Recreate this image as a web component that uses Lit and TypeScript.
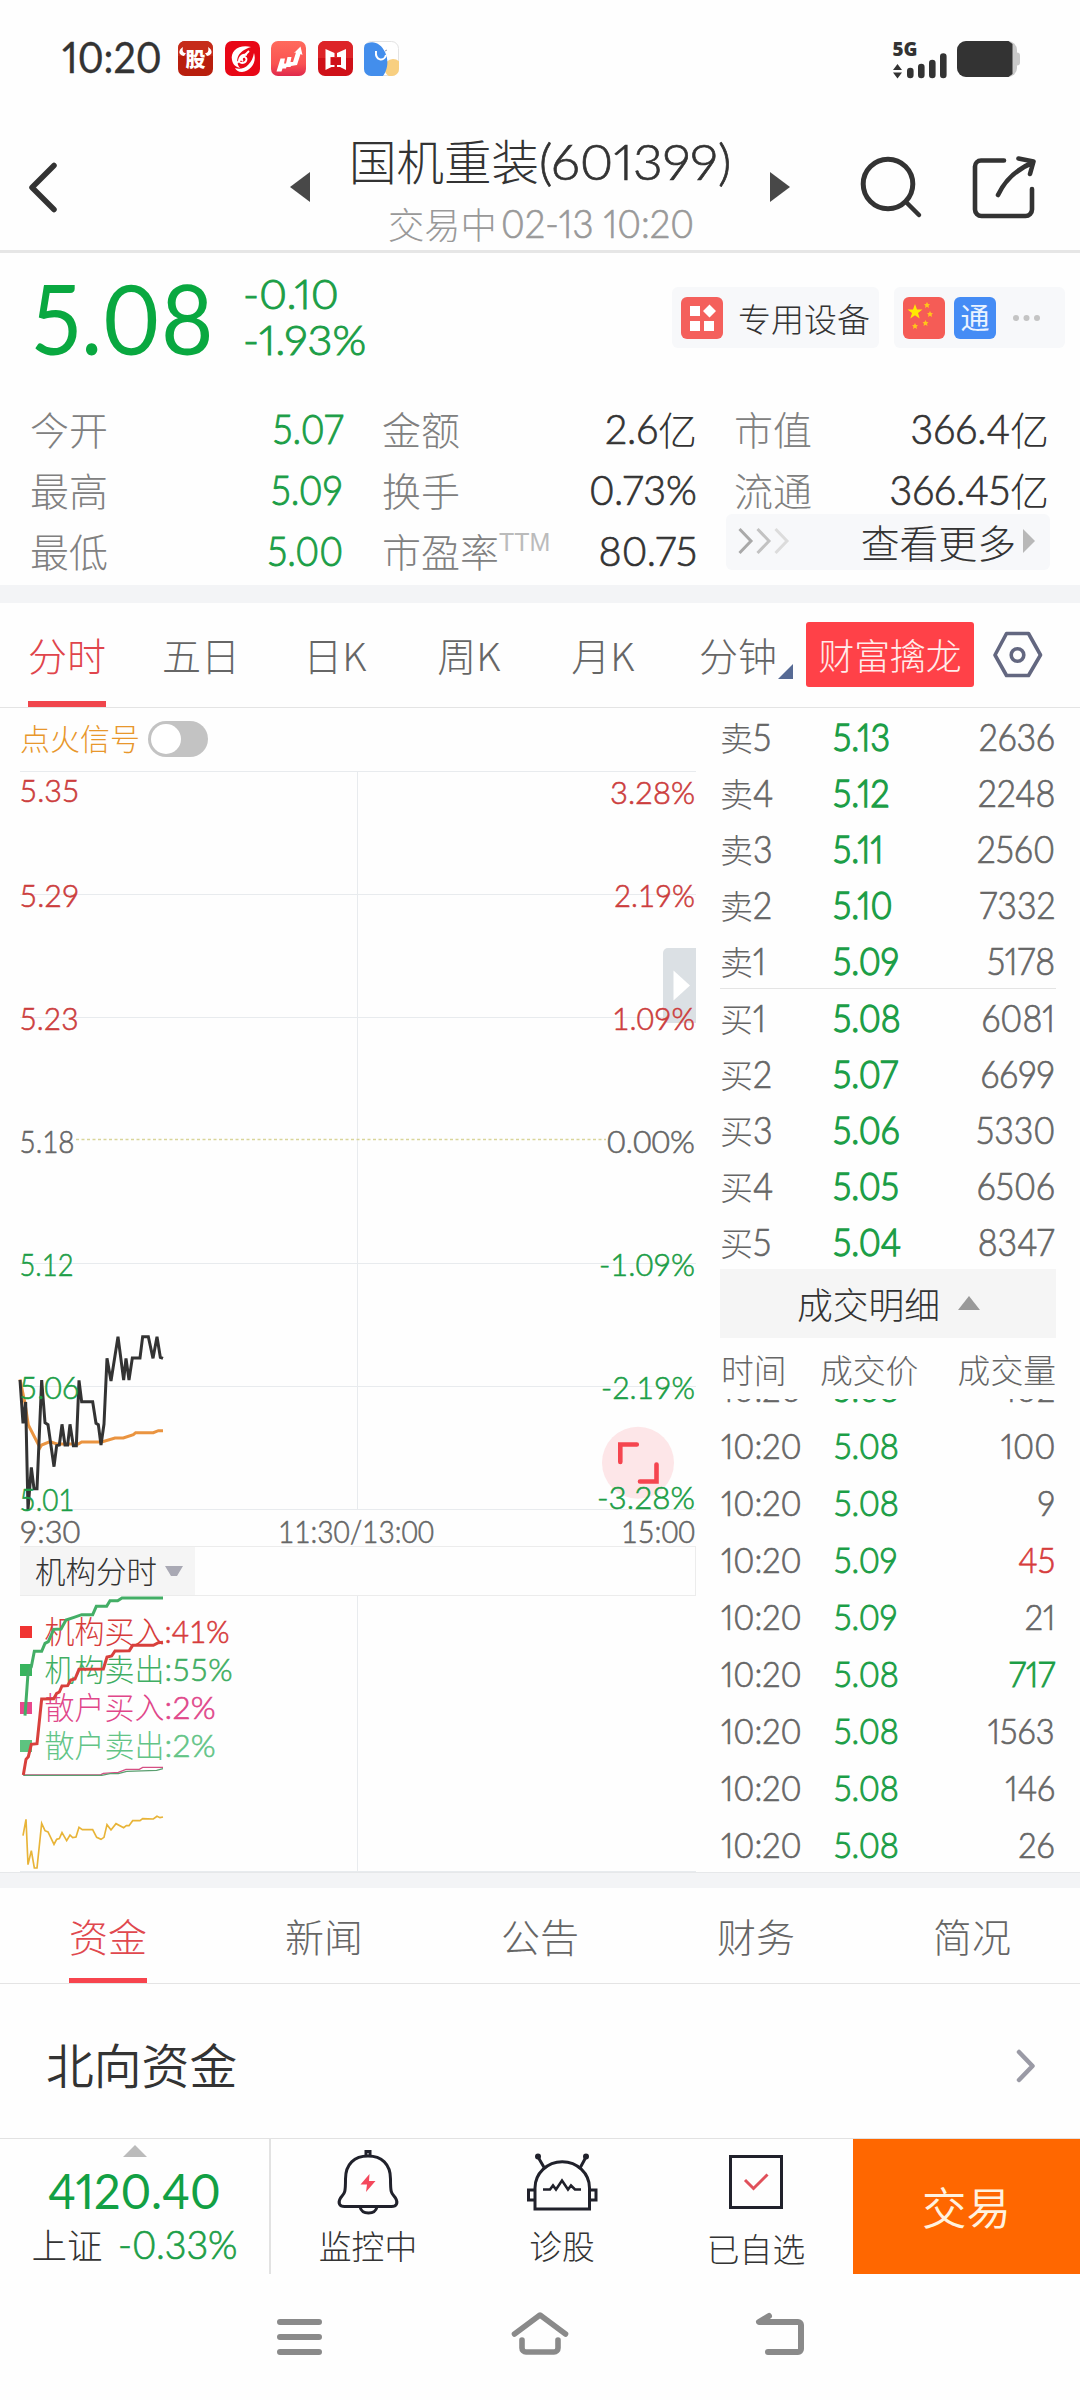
import { LitElement, html, svg, css } from "lit";
import { customElement } from "lit/decorators.js";

type Tone = "up" | "down" | "flat";

const base = css`
  :host { display: block; font-family: "Noto Sans CJK SC", sans-serif; font-weight: 300; color: #333; }
  * { box-sizing: border-box; }
  svg { display: block; flex: none; overflow: visible; }
  .n { display: inline-block; font-family: Lato, "Noto Sans CJK SC", sans-serif; font-weight: 300; font-variant-numeric: proportional-nums; -webkit-text-stroke: 0.700px currentColor; transform: scaleX(0.92); transform-origin: left center; white-space: nowrap; }
  .n.r { transform-origin: right center; }
  .n.c { transform-origin: center; }
  .up { color: #d63c3c; }
  .down { color: #1c9e47; }
  .flat { color: #666; }
`;

@customElement("status-bar")
class StatusBar extends LitElement {
  static styles = [base, css`
    .bar { display: flex; align-items: flex-start; height: 110px; padding: 40px 60px 0 62px; }
    .time { font-size: 42px; line-height: 34px; width: 116px; font-weight: 400; -webkit-text-stroke: 0.300px #333; transform: scaleX(0.94); }
    .apps { display: flex; gap: 11.6px; padding-top: 1px; }
    .sig { margin-left: auto; }
  `];
  render() {
    return html`<div class="bar">
      <span class="n time">10:20</span>
      <div class="apps">
        <svg width="35" height="35" viewBox="0 0 35 35"><rect width="35" height="35" rx="7" fill="#b81e0d"/><path d="M0 7a7 7 0 0 1 7-7h21a7 7 0 0 1 7 7v8H0z" fill="#c62c1a"/><text x="17.5" y="26" font-size="20" font-weight="900" font-family="Noto Sans CJK SC" fill="#fff" text-anchor="middle">股</text><path d="M5 6c-5 3-5 8 1 9l2-3c-3 0-4-2-3-6zM30 6c5 3 5 8-1 9l-2-3c3 0 4-2 3-6z" fill="#fff"/></svg>
        <svg width="35" height="35" viewBox="0 0 35 35"><rect width="35" height="35" rx="7" fill="#e80716"/><path d="M26 6C14 3 5 10 7 19c1 5 4 7 8 8-6-8-2-17 11-21z" fill="#fff"/><path d="M29 12c3 9-3 18-12 19-4 0-6-2-7-4 8 3 17-3 19-15z" fill="#fff"/><path d="M24 10 12 22M22 14c-7-2-11 8-5 8 4 0 6-4 3-6-3-1-4 3-2 4" fill="none" stroke="#fff" stroke-width="1.800"/></svg>
        <svg width="35" height="35" viewBox="0 0 35 35"><defs><linearGradient id="g" x2="0" y2="1"><stop stop-color="#ff6a5c"/><stop offset=".65" stop-color="#fa5252"/><stop offset="1" stop-color="#df284b"/></linearGradient></defs><rect width="35" height="35" rx="7" fill="url(#g)"/><path d="M9.500 17.500h4.500l-1 5h2l1.500-6.500h4l-1 5h2.500l3-9.500-2 .500 6.500-6.500 2 8.500-2-1-3.500 11-6 1-.500 1h-4l-.500 1.500h-3.500l-1 3H5.500z" fill="#fff"/></svg>
        <svg width="35" height="35" viewBox="0 0 35 35"><rect width="35" height="35" rx="7" fill="#cf1018"/><path d="M0 17V7a7 7 0 0 1 7-7h21a7 7 0 0 1 7 7v10z" fill="#dd2428"/><path d="M7.500 8l9 4v4h-4v8h4v2l-3 0-6 3zM28 8l-9 4v4h4v8h-4v2h3l6 3z" fill="#fff"/></svg>
        <svg width="35" height="35" viewBox="0 0 35 35"><defs><clipPath id="c"><rect width="35" height="35" rx="7"/></clipPath></defs><rect x=".5" y=".5" width="34" height="34" rx="7" fill="#fff" stroke="#e3e3e3"/><g clip-path="url(#c)"><circle cx="29" cy="27" r="9" fill="#f8cf80"/><path d="M0 4C8-2 17 2 21 11c5 11 1 20-2 24H0z" fill="#438eec"/></g><path d="M12 10c-1 10 8 11 10 4" fill="none" stroke="#fff" stroke-width="2"/><path d="M21 10l2-1" stroke="#99a" stroke-width="1"/></svg>
      </div>
      <svg class="sig" width="128" height="40" viewBox="892 39 128 40">
        <text x="892.5" y="55" font-family="Open Sans" font-weight="800" font-size="19.5" fill="#333" textLength="25" lengthAdjust="spacingAndGlyphs">5G</text>
        <path d="M893 69l4.500-6 4.500 6zM893 71.500l4.500 6 4.500-6z" fill="#333"/>
        <g stroke="#333" stroke-width="6.600" stroke-linecap="round"><path d="M910.300 70v4M921.300 66v8M932.300 62v12M943.300 55.500v18.500"/></g>
        <rect x="957" y="40" width="60" height="36" rx="9" fill="#c9c9c9"/><rect x="1014" y="51.500" width="6" height="13" rx="3" fill="#c9c9c9"/>
        <path d="M966 40h42.500l4 3v30l-4 3H966a9 9 0 0 1-9-9V49a9 9 0 0 1 9-9z" fill="#333"/>
      </svg>
    </div>`;
  }
}

@customElement("stock-header")
class StockHeader extends LitElement {
  static styles = [base, css`
    .head { display: flex; height: 143px; border-bottom: 3px solid #e6e6e6; padding: 0 44px 0 28px; }
    .back { margin-top: 51px; }
    .prev { margin: 62px 0 0 232px; }
    .mid { width: 460px; display: flex; flex-direction: column; align-items: center; }
    .title { display: flex; font-size: 47.500px; line-height: 50px; margin-top: 25px; width: 382px; white-space: nowrap; }
    .title .n { font-size: 49.500px; margin-top: 1px; transform: scaleX(1.045); }
    .sub { display: flex; font-size: 36.300px; line-height: 40px; margin-top: 17px; width: 304px; color: #999; white-space: nowrap; }
    .sub .n { font-size: 38.500px; margin-left: 4px; transform: scaleX(0.950); }
    .next { margin-top: 62px; }
    .search { margin: 46px 0 0 70px; }
    .share { margin: 46px 0 0 auto; }
  `];
  render() {
    return html`<div class="head">
      <svg class="back" width="30" height="54" viewBox="0 0 30 54"><path d="M26 4.500 4 26.500 26 48.500" fill="none" stroke="#333" stroke-width="5.500" stroke-linecap="round" stroke-linejoin="round"/></svg>
      <svg class="prev" width="20" height="30" viewBox="0 0 20 30"><path d="M20 0v30L0 15z" fill="#484848"/></svg>
      <div class="mid">
        <div class="title">国机重装<span class="n">(601399)</span></div>
        <div class="sub">交易中<span class="n">02-13 10:20</span></div>
      </div>
      <svg class="next" width="20" height="30" viewBox="0 0 20 30"><path d="M0 0v30l20-15z" fill="#484848"/></svg>
      <svg class="search" width="62" height="64" viewBox="860 156 62 64"><circle cx="888" cy="184" r="24.800" fill="none" stroke="#333" stroke-width="5"/><path d="M907 203l12 12" stroke="#333" stroke-width="4.500" stroke-linecap="round"/></svg>
      <svg class="share" width="64" height="64" viewBox="972 156 64 64" fill="none" stroke="#333" stroke-width="4.600" stroke-linecap="round" stroke-linejoin="round"><path d="M1004 160.500h-23a6 6 0 0 0-6 6v43a6.500 6.500 0 0 0 6.500 6.500h44a6.500 6.500 0 0 0 6.500-6.500V189"/><path d="M998 195c7-15 19-26 35-32.500M1018.500 158.500l15 3-3.500 12.500"/></svg>
    </div>`;
  }
}

const stats: [string, string, string, Tone | ""][][] = [
  [["今开", "5.07", "", "down"], ["金额", "2.6", "亿", ""], ["市值", "366.4", "亿", ""]],
  [["最高", "5.09", "", "down"], ["换手", "0.73%", "", ""], ["流通", "366.45", "亿", ""]],
  [["最低", "5.00", "", "down"], ["市盈率", "80.75", "", ""]],
];

@customElement("quote-panel")
class QuotePanel extends LitElement {
  static styles = [base, css`
    .panel { height: 332px; }
    .top { display: flex; height: 145px; padding: 0 15px 0 32px; }
    .price { font-size: 96px; line-height: 96px; width: 211px; color: #09a840; margin-top: 17px; font-weight: 400; -webkit-text-stroke: 0; transform: scaleX(0.94); }
    .delta { display: flex; flex-direction: column; font-size: 42px; line-height: 46px; margin-top: 17px; }
    .delta .n { transform: scaleX(1.030); -webkit-text-stroke-width: 1px; }
    .chip { display: flex; align-items: center; background: #f7f8fa; border-radius: 6px; height: 61px; }
    .a { margin: 34px 15px 0 auto; width: 207px; padding-left: 9px; font-size: 33px; }
    .a span { margin-left: 15px; line-height: 40px; }
    .b { margin-top: 34px; width: 171px; padding-left: 9px; gap: 9px; }
    .b .dots { margin-left: 8px; }
    .row { display: grid; grid-template-columns: 313px 39px 315px 37px 315px; height: 61px; padding-left: 30px; }
    .cell { display: flex; justify-content: space-between; align-items: center; font-size: 39px; line-height: 61px; white-space: nowrap; }
    .cell > span:first-child { color: #808080; display: flex; }
    .val { display: flex; align-items: center; }
    .val .n { font-size: 41px; transform: scaleX(0.965); }
    .val.down .n { transform: scaleX(0.900); -webkit-text-stroke-width: 1px; }
    .ttm { font-family: "Liberation Sans", sans-serif; font-size: 25px; color: #bbb; line-height: 44px; }
    .more { display: flex; align-items: center; height: 56px; width: 324px; margin: -6px 0 0 -8px; padding: 0 15px 2px 12px; border-radius: 6px; background: #f7f8fa; font-size: 38.800px; line-height: 54px; }
    .more span { margin-left: auto; margin-right: 7px; color: #333; }
    .band { height: 18px; background: #f3f4f6; }
  `];
  cell([label, v, unit, tone]: [string, string, string, string]) {
    return html`<div class="cell"><span>${label}${label === "市盈率" ? html`<span class="ttm">TTM</span>` : ""}</span><span class="val ${tone}"><span class="n r">${v}</span>${unit}</span></div>`;
  }
  render() {
    return html`<div class="panel">
      <div class="top">
        <span class="n price">5.08</span>
        <div class="delta down"><span class="n">-0.10</span><span class="n">-1.93%</span></div>
        <div class="chip a">
          <svg width="42" height="42" viewBox="0 0 42 42"><rect width="42" height="42" rx="6" fill="#f4605c"/><path d="M9 9h10v10H9zM9 24h10v10H9zM23 24h10v10H23zM28.500 7.500l6.500 6.500-6.500 6.500-6.500-6.500z" fill="#fff"/></svg>
          <span>专用设备</span>
        </div>
        <div class="chip b">
          <svg width="42" height="42" viewBox="0 0 42 42"><rect width="42" height="42" rx="6" fill="#f55c56"/><path d="M12 7l2 5.500h5.500l-4.500 3.500 1.700 5.500L12 18.200 7.300 21.500 9 16l-4.500-3.500H10z" fill="#ffea00"/><g fill="#ffc61a"><path d="M24 5l1 2 2 .200-1.500 1.500.500 2.300-2-1.200-2 1.200.500-2.300L21 7.200l2-.2z"/><path d="M27 14l1 2 2 .200-1.500 1.500.500 2.300-2-1.200-2 1.200.500-2.300-1.500-1.500 2-.2z"/><path d="M22.500 23l1 2 2 .200-1.500 1.500.500 2.300-2-1.200-2 1.200.500-2.300-1.500-1.500 2-.2z"/><path d="M12 26l1 2 2 .200-1.500 1.500.500 2.300-2-1.200-2 1.200.500-2.300L9 28.200l2-.2z"/></g></svg>
          <svg width="42" height="42" viewBox="0 0 42 42"><rect width="42" height="42" rx="6" fill="#458cf5"/><text x="21" y="31.500" font-size="29" font-weight="400" fill="#eaf3ff" text-anchor="middle">通</text></svg>
          <svg class="dots" width="30" height="8" viewBox="0 0 30 8" fill="#c4c4c4"><circle cx="3" cy="4" r="3"/><circle cx="13.500" cy="4" r="3"/><circle cx="24" cy="4" r="3"/></svg>
        </div>
      </div>
      ${stats.map((r) => html`<div class="row">
        ${this.cell(r[0])}<i></i>${this.cell(r[1])}<i></i>
        ${r[2] ? this.cell(r[2]) : html`<div class="more">
          <svg width="52" height="28" viewBox="0 0 52 28" fill="none" stroke-width="3"><path d="M1.500 2 13 14 1.500 26" stroke="#a9a9a9"/><path d="M19.500 2 31 14 19.500 26" stroke="#c2c2c2"/><path d="M37.500 2 49 14 37.500 26" stroke="#dcdcdc"/></svg>
          <span>查看更多</span>
          <svg width="12" height="24" viewBox="0 0 12 24"><path d="M0 0v24l12-12z" fill="#b8b8b8"/></svg>
        </div>`}
      </div>`)}
    </div><div class="band"></div>`;
  }
}

@customElement("period-tabs")
class PeriodTabs extends LitElement {
  static styles = [base, css`
    .tabs { display: flex; height: 105px; border-bottom: 1px solid #e4e4e4; font-size: 39px; color: #666; }
    .tab { width: 134px; display: flex; flex-direction: column; align-items: center; justify-content: flex-end; white-space: nowrap; }
    .tab .t { line-height: 50px; margin-bottom: 22px; }
    .tab i { width: 78px; height: 6px; }
    .tab.on { color: #e0454c; }
    .tab.on i { background: #f0464c; }
    .t .tri { display: inline-block; margin: 0 -18px -8px 1px; }
    .promo { margin: 19px 19px 0 2px; width: 168px; height: 65px; border-radius: 3px; background: #ff4148; color: #ffecea; font-size: 35.800px; line-height: 64px; text-align: center; }
    .hex { margin-top: 28px; }
  `];
  render() {
    const names = ["分时", "五日", "日K", "周K", "月K", "分钟"];
    return html`<div class="tabs">
      ${names.map((t, i) => html`<div class="tab ${i === 0 ? "on" : ""}"><span class="t">${t}${i === 5 ? html`<svg class="tri" width="15" height="15" viewBox="0 0 15 15"><path d="M15 0v15H0z" fill="#566a94"/></svg>` : ""}</span><i></i></div>`)}
      <div class="promo">财富擒龙</div>
      <svg class="hex" width="50" height="48" viewBox="0 0 50 48" fill="none" stroke="#636780"><path d="M13.500 2.500h22L47.500 24l-12 20.500h-22L2 24z" stroke-width="3.600" stroke-linejoin="round"/><circle cx="24.500" cy="24" r="6.300" stroke-width="3.600"/></svg>
    </div>`;
  }
}

@customElement("price-chart")
class PriceChart extends LitElement {
  static styles = [base, css`
    .top { display: flex; align-items: center; height: 63px; padding: 0 0 3px 20px; color: #e8972c; font-size: 30px; line-height: 38px; }
    .label { margin-bottom: 2px; }
    .switch { width: 60px; height: 36px; border-radius: 18px; background: #c3c3c3; padding: 3px; margin: 2px 0 0 8px; }
    .switch i { display: block; width: 30px; height: 30px; border-radius: 50%; background: #fff; }
    svg .l { font-family: Lato, sans-serif; font-weight: 300; font-size: 32px; stroke-width: 0.600px; }
    .pick { display: flex; align-items: center; width: 676px; height: 50px; margin-left: 20px; border: 1px solid #ececec; border-left: 0; }
    .pick div { display: flex; align-items: center; width: 175px; height: 48px; padding: 0 0 2px 15px; background: #f5f5f5; color: #333; font-size: 30.500px; line-height: 40px; white-space: nowrap; }
    .pick svg { margin: 2px 0 0 8px; }
    .legend text { font-size: 30.600px; }
  `];
  label(x: number, cy: number, t: string, w: number, c: string, end = false) {
    return svg`<text class="l" x=${end ? x - w : x} y=${cy + 10.8} textLength=${w} lengthAdjust="spacingAndGlyphs" fill=${c} stroke=${c}>${t}</text>`;
  }
  render() {
    const R = "#cc3d3d", G = "#1c9e47", K = "#666";
    const left: [number, string, string, number][] = [[791, "5.35", R, 60], [896, "5.29", R, 60], [1019, "5.23", R, 59], [1142, "5.18", K, 55], [1265, "5.12", G, 54], [1388.5, "5.06", G, 60], [1500.5, "5.01", G, 55], [1532, "9:30", K, 61]];
    const right: [number, string, string, number][] = [[793, "3.28%", R, 85], [896, "2.19%", R, 81], [1019, "1.09%", R, 83], [1142, "0.00%", K, 88], [1265, "-1.09%", G, 96], [1388.5, "-2.19%", G, 94], [1498, "-3.28%", G, 98], [1532, "15:00", K, 74]];
    const legend: [string, string, number, string][] = [["机构买入", ":41%", 65, "#d63c3c"], ["机构卖出", ":55%", 68, "#3fae63"], ["散户买入", ":2%", 51, "#e0468a"], ["散户卖出", ":2%", 51, "#62c486"]];
    const sq = ["#f03432", "#38b45e", "#e8488c", "#5dc380"];
    return html`
      <div class="top"><span class="label">点火信号</span><div class="switch"><i></i></div></div>
      <svg width="710" height="775" viewBox="0 771 710 775" fill="none">
        <g stroke="#e8ebee" stroke-width="1">
          ${[771.5, 894.5, 1017.5, 1263.5, 1386.5, 1509.5].map((y) => svg`<path d="M20 ${y}H696"/>`)}
          <path d="M357.500 771V1510"/>
        </g>
        <path d="M76 1139.500H606" stroke="#d9d59a" stroke-width="1.500" stroke-dasharray="3 2.500"/>
        <path d="M668 948h28v75h-28a5 5 0 0 1-5-5v-65a5 5 0 0 1 5-5z" fill="#dbe0e4"/><path d="M673.500 970.500v30l16.500-15z" fill="#fff"/>
        <circle cx="638" cy="1462.700" r="36" fill="#fde6e8"/>
        <path d="M620.300 1462v-17.500h16.500M656.500 1464.500v17h-16.500" stroke="#f5454f" stroke-width="4.600" stroke-linecap="round"/>
        <g transform="translate(0 1200) scale(0.33333)">
          <polyline points="60,538 75,610 85,675 120,743 125,735 150,725 170,732 235,732 245,726 305,726 345,714 370,714 400,704 407,698 460,698 475,692 489,692" stroke="#ea9440" stroke-width="9"/>
          <polyline points="60,540 69,670 77,606 84,930 94,802 102,866 111,866 125,540 135,668 144,674 162,800 170,737 178,735 186,673 195,735 203,735 210,673 220,737 229,737 237,541 245,605 278,605 288,670 295,674 303,735 312,672 321,475 333,543 354,410 371,540 378,475 387,540 397,474 420,474 428,410 445,410 459,475 471,410 481,472 489,475" stroke="#333" stroke-width="9"/>
        </g>
        ${left.map(([y, t, c, w]) => this.label(19.5, y, t, w, c))}
        ${right.map(([y, t, c, w]) => this.label(695, y, t, w, c, true))}
        ${this.label(278, 1532, "11:30/13:00", 156, K)}
      </svg>
      <div class="pick"><div>机构分时<svg width="18" height="11" viewBox="0 0 18 11"><path d="M0 0h18l-6 10H6z" fill="#a9a9b4"/></svg></div></div>
      <svg class="legend" width="710" height="276" viewBox="0 1596 710 276" fill="none">
        <path d="M20 1871.500H696M357.500 1596V1871" stroke="#e8ebee"/>
        ${sq.map((c, i) => svg`<rect x="20" y=${1626 + i * 38} width="12" height="12" fill=${c}/>`)}
        ${legend.map(([t, v, w, c], i) => svg`<text x="44.500" y=${1643 + i * 38} fill=${c} textLength="120" lengthAdjust="spacingAndGlyphs">${t}</text><text class="l" x="164.500" y=${1643 + i * 38} fill=${c} stroke=${c} textLength=${w} lengthAdjust="spacingAndGlyphs">${v}</text>`)}
        <g transform="translate(0 1530) scale(0.33333)">
          <polyline points="70,735 300,735 310,730 355,727 378,718 418,718 428,712 489,712" stroke="#d54f84" stroke-width="4"/>
          <polyline points="70,736 305,736 330,731 355,731 380,724 470,721 489,716" stroke="#5a9f70" stroke-width="4"/>
          <polyline points="75,557 84,430 94,410 103,364 125,364 135,340 145,335 161,298 183,297 198,270 222,262 245,254 278,254 289,229 320,229 330,212 353,212 366,204 489,204" stroke="#43ae66" stroke-width="9"/>
          <polyline points="70,735 78,688 85,680 94,643 111,641 125,507 161,506 170,490 178,486 186,468 203,467 212,450 225,447 237,418 310,417 321,381 335,378 345,363 388,362 398,346 460,346 475,338 489,337" stroke="#d8403c" stroke-width="9"/>
          <polyline points="69,917 78,868 84,1004 94,962 103,1014 111,1014 125,880 135,902 144,906 162,943 170,928 178,926 186,908 200,932 210,915 218,923 228,921 237,892 247,899 278,899 290,922 303,928 312,922 321,884 333,900 348,881 371,893 379,887 387,887 398,872 420,872 428,866 460,867 471,859 480,863 489,861" stroke="#e8b438" stroke-width="5"/>
        </g>
      </svg>`;
  }
}

const asks = [["卖5", "5.13", "2636"], ["卖4", "5.12", "2248"], ["卖3", "5.11", "2560"], ["卖2", "5.10", "7332"], ["卖1", "5.09", "5178"]];
const bids = [["买1", "5.08", "6081"], ["买2", "5.07", "6699"], ["买3", "5.06", "5330"], ["买4", "5.05", "6506"], ["买5", "5.04", "8347"]];
const trades: [string, string, Tone][] = [["5.08", "102", "flat"], ["5.08", "100", "flat"], ["5.08", "9", "flat"], ["5.09", "45", "up"], ["5.09", "21", "flat"], ["5.08", "717", "down"], ["5.08", "1563", "flat"], ["5.08", "146", "flat"], ["5.08", "26", "flat"]];

@customElement("order-book")
class OrderBook extends LitElement {
  static styles = [base, css`
    :host { width: 336px; color: #666; }
    .book { padding-top: 1px; }
    .row { display: grid; grid-template-columns: 112px 1fr auto; height: 56px; line-height: 56px; align-items: center; font-size: 33px; padding: 0 1px; }
    .row .n { font-size: 37px; }
    .row .down { -webkit-text-stroke-width: 1.400px; }
    .side { display: flex; margin-left: -1px; }
    .sep { border-top: 1px solid #e4e4e4; margin: -1px 0 1px; }
    .toggle { display: flex; justify-content: center; align-items: center; gap: 18px; height: 69px; margin-top: -1px; background: #f5f5f5; color: #333; font-size: 35.800px; line-height: 60px; padding: 0 0 2px 1px; }
    .cols { display: flex; justify-content: space-between; height: 61px; line-height: 62px; font-size: 32.800px; padding: 0 0 0 1px; }
    .cols span:nth-child(2) { margin-right: 6px; }
    .list { height: 473px; overflow: hidden; }
    .list .in { margin-top: -39px; }
    .list .row { height: 57px; line-height: 56px; grid-template-columns: 113px 1fr auto; }
    .list .row .n { font-size: 35.500px; }
    .list .row .n.t { transform: scaleX(0.92); }
    .list .row .down { -webkit-text-stroke-width: 1px; }
  `];
  book(r: string[]) {
    return html`<div class="row"><span class="side">${r[0][0]}<span class="n">${r[0][1]}</span></span><span class="n down">${r[1]}</span><span class="n r">${r[2]}</span></div>`;
  }
  render() {
    return html`<div class="book">
      ${asks.map((r) => this.book(r))}
      <div class="sep"></div>
      ${bids.map((r) => this.book(r))}
      <div class="toggle">成交明细<svg width="22" height="14" viewBox="0 0 22 14"><path d="M11 0l11 14H0z" fill="#999"/></svg></div>
      <div class="cols"><span>时间</span><span>成交价</span><span>成交量</span></div>
      <div class="list"><div class="in">${trades.map(([p, v, t]) => html`<div class="row"><span class="n t">10:20</span><span class="n down">${p}</span><span class="n r ${t}">${v}</span></div>`)}</div></div>
    </div>`;
  }
}

@customElement("info-section")
class InfoSection extends LitElement {
  static styles = [base, css`
    .band { height: 16px; background: #f3f4f6; border-top: 1px solid #e6e8ea; }
    .tabs { display: flex; height: 96px; border-bottom: 1px solid #e4e4e4; font-size: 39px; color: #666; }
    .tab { flex: 1; display: flex; flex-direction: column; align-items: center; }
    .tab span { line-height: 90px; height: 90px; padding-top: 2px; }
    .tab i { width: 78px; height: 6px; }
    .on { color: #e0484e; }
    .on i { background: #f7444e; }
    .north { display: flex; align-items: center; justify-content: space-between; height: 154px; padding: 6px 45px 0 46px; font-size: 47.800px; font-weight: 350; line-height: 60px; }
    .north svg { margin-top: 4px; }
  `];
  render() {
    return html`<div class="band"></div>
      <div class="tabs">${["资金", "新闻", "公告", "财务", "简况"].map((t, i) => html`<div class="tab ${i === 0 ? "on" : ""}"><span>${t}</span><i></i></div>`)}</div>
      <div class="north"><span>北向资金</span><svg width="19" height="34" viewBox="0 0 19 34"><path d="M3 3l13.500 14L3 31" fill="none" stroke="#9a9aa5" stroke-width="4.500" stroke-linecap="round" stroke-linejoin="round"/></svg></div>`;
  }
}

@customElement("bottom-bar")
class BottomBar extends LitElement {
  static styles = [base, css`
    .bar { display: flex; height: 136px; border-top: 1px solid #e2e2e2; }
    .index { display: flex; flex-direction: column; align-items: center; width: 271px; border-right: 2px solid #e2e2e2; padding-top: 6px; }
    .index .n.big { font-size: 49px; line-height: 60px; margin-top: 3px; color: #12a044; font-weight: 400; transform: scaleX(0.955); -webkit-text-stroke: 0; }
    .pair { display: flex; align-items: center; font-size: 35.500px; line-height: 44px; margin-top: 2px; width: 206px; gap: 15px; white-space: nowrap; }
    .pair .n { font-size: 38.500px; transform: scaleX(0.98); }
    .act { width: 194px; display: flex; flex-direction: column; align-items: center; font-size: 32.800px; line-height: 40px; }
    .act svg { margin-top: 10px; }
    .act span { margin-top: 8px; }
    .act:nth-of-type(4) span { margin-top: 14px; }
    .trade { margin-left: auto; width: 227px; background: #ff6700; color: #fff2df; font-size: 44.500px; line-height: 134px; text-align: center; font-weight: 350; }
    .nav { display: flex; justify-content: center; gap: 182px; padding-top: 34px; height: 126px; }
  `];
  render() {
    return html`<div class="bar">
      <div class="index"><svg width="24" height="12" viewBox="0 0 24 12"><path d="M12 0l12 12H0z" fill="#bbb"/></svg><span class="n c big">4120.40</span><div class="pair"><span>上证</span><span class="n down">-0.33%</span></div></div>
      <div class="act"><svg width="64" height="68" viewBox="336 2148 64 68" fill="none" stroke="#20212b" stroke-width="3"><path d="M345.500 2178c0-15 9-23 22.500-23s22.500 8 22.500 23c0 15 1 14 5 19 3 5 1 8.500-4 8.500h-47c-5 0-7-3.500-4-8.500 4-5 5-4 5-19z"/><path d="M360 2206c2 8 15 8 17 0"/><path d="M366 2155v-4.500h4v4.500" stroke-width="3"/><path d="M369.500 2173l-9 10.500h6.500l-1 7.500 9.500-11h-6.500z" fill="#f4485c" stroke="none"/></svg><span>监控中</span></div>
      <div class="act"><svg width="76" height="68" viewBox="524 2148 76 68" fill="none" stroke="#20212b" stroke-width="3"><path d="M535 2208v-21a27 26 0 0 1 54.500 0v21z"/><path d="M535 2189h-6.500v10h6.500M589.500 2189h6.500v10h-6.500M545 2168l-7-12M579.500 2168l6.500-12"/><circle cx="538" cy="2155.500" r="1.500"/><circle cx="586" cy="2155.500" r="1.500"/><path d="M543 2188.500h7l3-4 3 4 6-9 6 9 3-4 4 4h6" stroke-width="2.600"/></svg><span>诊股</span></div>
      <div class="act"><svg width="54" height="65" viewBox="729 2148 54 65" fill="none"><rect x="730.500" y="2155.500" width="51" height="51" stroke="#20212b" stroke-width="3"/><path d="M745 2179l8.500 8.500 14-14" stroke="#e0505a" stroke-width="3"/></svg><span>已自选</span></div>
      <div class="trade">交易</div>
    </div>
    <div class="nav">
      <svg width="58" height="50" viewBox="0 0 58 50" stroke="#8a8a8a" stroke-width="6" stroke-linecap="round"><path d="M9 14h39M9 29h39M9 44h39"/></svg>
      <svg width="58" height="50" viewBox="511 2308 58 50" fill="none" stroke="#8a8a8a" stroke-width="5.600" stroke-linecap="round" stroke-linejoin="round"><path d="M514.500 2334 540 2315l25.500 19M522 2340v8a4 4 0 0 0 4 4h28a4 4 0 0 0 4-4v-8"/></svg>
      <svg width="58" height="50" viewBox="751 2308 58 50" fill="none" stroke="#8a8a8a" stroke-width="6" stroke-linecap="round" stroke-linejoin="round"><path d="M769 2316l-10 6h39a3 3 0 0 1 3 3v24a3 3 0 0 1-3 3h-30"/></svg>
    </div>`;
  }
}

@customElement("app-root")
class AppRoot extends LitElement {
  static styles = css`
    :host { display: block; width: 1080px; height: 2400px; background: #fefefe; overflow: hidden; }
    .market { display: flex; height: 1164px; overflow: hidden; }
    .chart { width: 720px; }
  `;
  render() {
    return html`<status-bar></status-bar><stock-header></stock-header><quote-panel></quote-panel><period-tabs></period-tabs>
      <div class="market"><price-chart class="chart"></price-chart><order-book></order-book></div>
      <info-section></info-section><bottom-bar></bottom-bar>`;
  }
}
